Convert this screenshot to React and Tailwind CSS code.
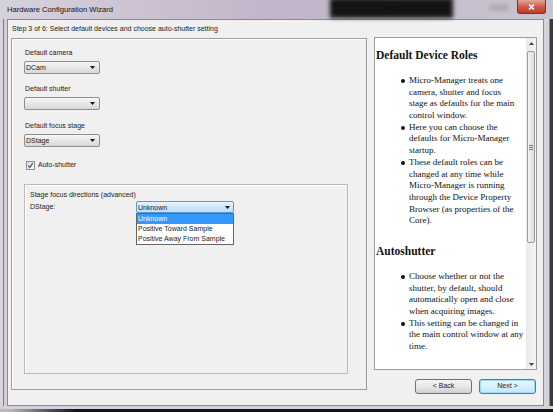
import React from "react";

const DownArrow = () => (
  <svg width="5" height="3" viewBox="0 0 5 3" className="block">
    <path d="M0 0H5L2.5 3Z" fill="#111" />
  </svg>
);

function Combo({ value, className, active }) {
  return (
    <div className={className}>
      <span className="flex-1 whitespace-nowrap pl-[1px]">{value}</span>
      <span className={active ? "mr-[3px]" : "mr-[4px]"}>
        <DownArrow />
      </span>
    </div>
  );
}

const normalCombo =
  "flex items-center h-[13px] w-[76px] border border-[#8e8f8f] rounded-[2px] bg-linear-to-b from-[#f6f6f6] to-[#d8d8d8] leading-none";

function Line({ children }) {
  return <div className="h-[11.7px] leading-[11.7px] whitespace-nowrap">{children}</div>;
}

function Bullet({ lines }) {
  return (
    <li className="flex ml-[25px]">
      <div className="w-[8px] shrink-0 h-[11.7px] flex items-center">
        <div className="w-[4px] h-[4px] rounded-full bg-[#111]" />
      </div>
      <div>
        {lines.map((l, i) => (
          <Line key={i}>{l}</Line>
        ))}
      </div>
    </li>
  );
}

export default function App() {
  return (
    <div className="w-[553px] h-[412px] overflow-hidden relative flex flex-col bg-[#cfc7d4] font-['Liberation_Sans',Arial,sans-serif] text-[7px] text-[#1b1b1b]">
      {/* title bar */}
      <div className="relative h-[19px] shrink-0 flex items-center bg-linear-to-r from-[#d7d1dc] via-[#c2b4c9] to-[#c9c4cf]">
        <div className="absolute left-[330px] top-[-2px] w-[123px] h-[20px] bg-[#141414] blur-[2px]" />
        <div className="absolute left-[490px] top-[5px] w-[18px] h-[5px] bg-[#a9a3ad] blur-[2px]" />
        <span className="pl-[7px] text-[7.6px] text-[#111] relative">Hardware Configuration Wizard</span>
        <div className="absolute right-[7px] top-0 w-[29px] h-[14px] rounded-b-[3px] border border-t-0 border-[#7d3129] bg-linear-to-b from-[#e5a596] via-[#cf5b4a] to-[#c0392b] flex items-center justify-center">
          <svg width="7" height="6" viewBox="0 0 7 6">
            <path d="M1 0.5L6 5.5M6 0.5L1 5.5" stroke="#fff" strokeWidth="1.6" />
          </svg>
        </div>
      </div>

      {/* body */}
      <div className="flex h-[387px] shrink-0">
        <div className="w-[7px] shrink-0 flex">
          <div className="w-[3px] bg-[#d8d3dc]" />
          <div className="w-[1px] bg-[#7d7882]" />
          <div className="flex-1 bg-[#d4cdd8]" />
        </div>
        <div className="w-[537px] shrink-0 bg-[#f0f0f0] border border-[#8d8893] flex flex-col">
          <div className="h-[18px] flex items-center pl-[4px] whitespace-nowrap">
            Step 3 of 6: Select default devices and choose auto-shutter setting
          </div>
          <div className="flex pl-[3px] gap-[7px]">
            {/* left panel */}
            <div className="w-[356px] h-[352px] border border-[#9d9d9d] shadow-[inset_1px_1px_0_#ffffff] flex flex-col pl-[12px] pt-[9px]">
              <div className="pl-[1px] h-[9px] leading-[9px]">Default camera</div>
              <Combo className={"mt-[4px] " + normalCombo} value="DCam" />
              <div className="mt-[10px] pl-[1px] h-[9px] leading-[9px]">Default shutter</div>
              <Combo className={"mt-[4px] " + normalCombo} value="" />
              <div className="mt-[11px] pl-[1px] h-[9px] leading-[9px]">Default focus stage</div>
              <Combo className={"mt-[4px] " + normalCombo} value="DStage" />
              <div className="mt-[14px] ml-[2px] h-[9px] flex items-center">
                <div className="w-[9px] h-[9px] border border-[#8e8f8f] bg-linear-to-br from-[#dcdcdc] to-[#fbfbfb] flex items-center justify-center">
                  <svg width="7" height="7" viewBox="0 0 7 7">
                    <path d="M1.2 3.6L2.8 5.4L5.8 1.2" stroke="#3d5a94" strokeWidth="1.3" fill="none" />
                  </svg>
                </div>
                <span className="ml-[3px]">Auto-shutter</span>
              </div>
              <div className="mt-[14px] w-[324px] h-[190px] border border-[#b9b9b9] shadow-[inset_1px_1px_0_#ffffff] flex flex-col pl-[5px] pt-[5px]">
                <div className="h-[9px] leading-[9px]">Stage focus directions (advanced)</div>
                <div className="relative mt-[2px] flex items-center h-[12px]">
                  <span className="w-[106px] shrink-0">DStage:</span>
                  <Combo
                    active
                    className="flex items-center h-[12px] w-[98px] border border-[#5b9bd5] rounded-[2px] bg-linear-to-b from-[#e9f4fd] to-[#bcdcf5] leading-none"
                    value="Unknown"
                  />
                  <div className="absolute left-[106px] top-[12px] w-[98px] h-[32px] bg-white border border-[#646464] flex flex-col">
                    <div className="h-[10px] leading-[10px] bg-[#3399ff] text-white pl-[1px]">Unknown</div>
                    <div className="h-[10px] leading-[10px] pl-[1px] whitespace-nowrap">Positive Toward Sample</div>
                    <div className="h-[10px] leading-[10px] pl-[1px] whitespace-nowrap">Positive Away From Sample</div>
                  </div>
                </div>
              </div>
            </div>

            {/* right column */}
            <div className="w-[163px] flex flex-col">
              <div className="h-[333px] -mt-[1px] border border-[#9b9b9b] bg-white flex">
                <div className="flex-1 overflow-hidden pl-[1px] font-['Liberation_Serif','Times_New_Roman',serif] text-[9px] text-[#121212]">
                  <div className="mt-[10px] h-[14px] leading-[14px] text-[11.5px] font-bold whitespace-nowrap">
                    Default Device Roles
                  </div>
                  <ul className="mt-[13px]">
                    <Bullet
                      lines={[
                        "Micro-Manager treats one",
                        "camera, shutter and focus",
                        "stage as defaults for the main",
                        "control window.",
                      ]}
                    />
                    <Bullet lines={["Here you can choose the", "defaults for Micro-Manager", "startup."]} />
                    <Bullet
                      lines={[
                        "These default roles can be",
                        "changed at any time while",
                        "Micro-Manager is running",
                        "through the Device Property",
                        "Browser (as properties of the",
                        "Core).",
                      ]}
                    />
                  </ul>
                  <div className="mt-[17px] h-[14px] leading-[14px] text-[11.5px] font-bold">Autoshutter</div>
                  <ul className="mt-[13px]">
                    <Bullet
                      lines={[
                        "Choose whether or not the",
                        "shutter, by default, should",
                        "automatically open and close",
                        "when acquiring images.",
                      ]}
                    />
                    <Bullet lines={["This setting can be changed in", "the main control window at any", "time."]} />
                  </ul>
                </div>
                {/* scrollbar */}
                <div className="w-[10px] shrink-0 flex flex-col bg-linear-to-r from-[#e9e9e9] to-[#f5f5f5]">
                  <div className="h-[10px] flex items-center justify-center">
                    <svg width="5" height="3" viewBox="0 0 5 3">
                      <path d="M0 3H5L2.5 0Z" fill="#4a4a4a" />
                    </svg>
                  </div>
                  <div className="mt-[3px] h-[192px] mx-[1px] border border-[#9c9c9c] rounded-[2px] bg-linear-to-r from-[#f4f4f4] to-[#dadada] flex flex-col items-center justify-center gap-[1px]">
                    <div className="w-[4px] h-[1px] bg-[#7a7a7a]" />
                    <div className="w-[4px] h-[1px] bg-[#7a7a7a]" />
                    <div className="w-[4px] h-[1px] bg-[#7a7a7a]" />
                  </div>
                  <div className="flex-1" />
                  <div className="h-[10px] flex items-center justify-center">
                    <svg width="5" height="3" viewBox="0 0 5 3">
                      <path d="M0 0H5L2.5 3Z" fill="#4a4a4a" />
                    </svg>
                  </div>
                </div>
              </div>
              <div className="mt-[9px] flex justify-end gap-[7px] pr-[1px]">
                <div className="w-[57px] h-[15px] border border-[#707070] rounded-[3px] bg-linear-to-b from-[#f3f3f3] via-[#e8e8e8] to-[#d0d0d0] flex items-center justify-center">
                  &lt; Back
                </div>
                <div className="w-[57px] h-[15px] border border-[#3c7fb1] rounded-[3px] shadow-[inset_0_0_0_1px_#9fdcf5] bg-linear-to-b from-[#eaf6fd] via-[#d9f0fc] to-[#bee6fd] flex items-center justify-center">
                  Next &gt;
                </div>
              </div>
            </div>
          </div>
        </div>
        <div className="w-[9px] shrink-0 flex">
          <div className="w-[5px] bg-[#d6d2da]" />
          <div className="w-[1px] bg-[#8a8590]" />
          <div className="flex-1 bg-[#3a3a3a]" />
        </div>
      </div>

      {/* bottom frame */}
      <div className="flex-1 flex flex-col">
        <div className="h-[3px] bg-[#d4cfd8]" />
        <div className="flex-1 bg-linear-to-r from-[#b9b6bd] from-[2%] to-[#121212] to-[14%]" />
      </div>
    </div>
  );
}
